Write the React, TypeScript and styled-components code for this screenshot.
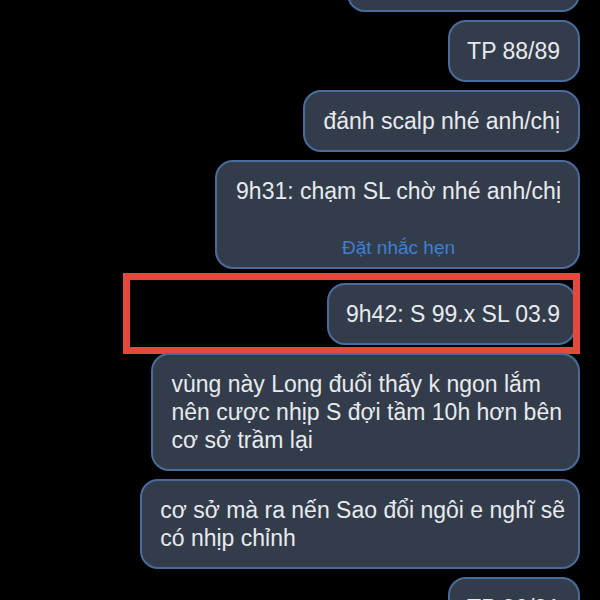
import React from "react";
import styled, { createGlobalStyle } from "styled-components";

const Global = createGlobalStyle`
  html, body { margin: 0; padding: 0; background: #000; }
  body { overflow: hidden; font-family: "Liberation Sans", Arial, sans-serif; }
`;

const Thread = styled.div`
  width: 600px;
  height: 600px;
  overflow: hidden;
  display: flex;
  flex-direction: column;
  align-items: flex-end;
  gap: 8px;
  padding-right: 20px;
  box-sizing: border-box;
  background: #000;
`;

const Bubble = styled.div<{ $w?: number; $pl?: number; $pr?: number }>`
  box-sizing: border-box;
  flex: none;
  ${(p) => (p.$w ? `width: ${p.$w}px;` : "width: fit-content;")}
  padding: 15px ${(p) => p.$pr ?? 18}px 15px ${(p) => p.$pl ?? 18}px;
  background: #333c4a;
  border: 2px solid #4a6c9c;
  border-radius: 18px;
  color: #e8eaee;
  font-size: 23px;
  line-height: 28px;
  white-space: nowrap;
`;

const TopCut = styled(Bubble)`
  height: 62px;
  margin-top: -50px;
`;

const Link = styled.div`
  margin-top: 32px;
  margin-bottom: -7px;
  text-align: center;
  color: #3f7fd4;
  font-size: 19px;
  line-height: 22px;
`;

const Highlight = styled.div`
  box-sizing: border-box;
  flex: none;
  width: 457px;
  margin: -4px 0 -9px;
  border: 7px solid #e5483d;
  padding: 3px 0 2px;
  display: flex;
  justify-content: flex-end;
  overflow: hidden;
`;

const HighlightBubble = styled(Bubble)`
  margin-right: -3px;
`;

export default function App() {
  return (
    <>
      <Global />
      <Thread>
        <TopCut $w={233} />
        <Bubble $pl={17} $pr={18}>TP 88/89</Bubble>
        <Bubble>đánh scalp nhé anh/chị</Bubble>
        <Bubble $pl={19} $pr={17}>
          9h31: chạm SL chờ nhé anh/chị
          <Link>Đặt nhắc hẹn</Link>
        </Bubble>
        <Highlight>
          <HighlightBubble $pl={17} $pr={14}>9h42: S 99.x SL 03.9</HighlightBubble>
        </Highlight>
        <Bubble $pl={18} $pr={16}>
          vùng này Long đuổi thấy k ngon lắm
          <br />
          nên cược nhịp S đợi tầm 10h hơn bên
          <br />
          cơ sở trầm lại
        </Bubble>
        <Bubble $pl={18} $pr={13}>
          cơ sở mà ra nến Sao đổi ngôi e nghĩ sẽ
          <br />
          có nhịp chỉnh
        </Bubble>
        <Bubble $pl={17} $pr={18}>TP 90/91</Bubble>
      </Thread>
    </>
  );
}
